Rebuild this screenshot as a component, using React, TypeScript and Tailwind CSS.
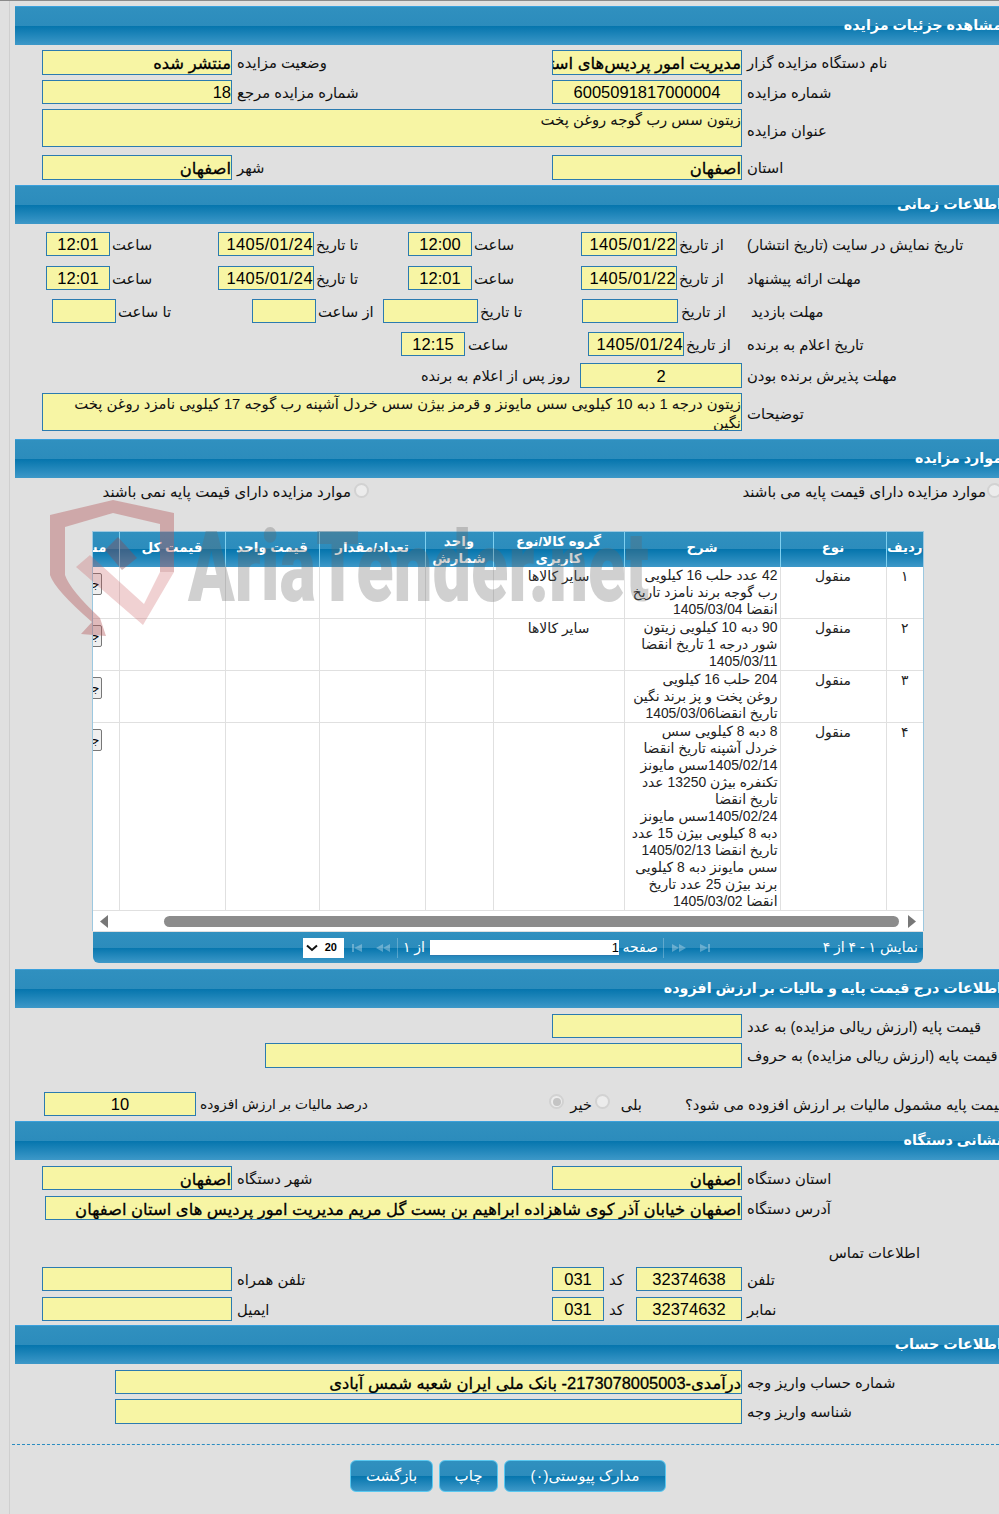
import type { ReactNode } from 'react';

const barGradient =
  'bg-[linear-gradient(to_bottom,#3090bf_0%,#2c8cbc_50%,#0575ad_50%,#3d98c8_100%)]';

function SectionHeader({ title, className = '' }: { title: string; className?: string }) {
  return (
    <div
      className={`h-[39px] ml-[5px] flex items-center overflow-hidden border-t border-[#3aa0dc] ${barGradient} ${className}`}
    >
      <span className="-mr-[3px] shrink-0 text-[14.3px] font-bold text-white whitespace-nowrap">{title}</span>
    </div>
  );
}

function Row({ className = '', children }: { className?: string; children: ReactNode }) {
  return <div className={`flex shrink-0 ${className}`}>{children}</div>;
}

// label cell: text sits at the left edge of the cell, the way the old form tables do
function Label({ className = '', children }: { className?: string; children: ReactNode }) {
  return (
    <div className={`flex items-center justify-end shrink-0 overflow-hidden pl-[5px] pt-[2px] text-[14.8px] text-[#111] whitespace-nowrap ${className}`}>
      <span className="shrink-0">{children}</span>
    </div>
  );
}

function Field({
  className = '',
  value = '',
  center = false,
  bold = false,
}: {
  className?: string;
  value?: string;
  center?: boolean;
  bold?: boolean;
}) {
  return (
    <div
      className={`flex items-center shrink-0 overflow-hidden border border-[#2b7bb0] bg-[#f7f5a4] text-black whitespace-nowrap ${
        center ? 'justify-center' : 'justify-start'
      } ${bold ? 'pt-[2px] text-[16.4px] [-webkit-text-stroke:0.3px_black]' : 'pt-[1px] text-[16.5px]'} ${className}`}
    >
      {value}
    </div>
  );
}

function Area({ className = '', value }: { className?: string; value: string }) {
  return (
    <div className={`shrink-0 overflow-hidden border border-[#2b7bb0] bg-[#f7f5a4] pt-[1px] pl-[10px] text-[14.8px] leading-[19px] text-[#111] ${className}`}>
      {value}
    </div>
  );
}

function Radio({ className = '', checked = false }: { className?: string; checked?: boolean }) {
  return (
    <span className={`flex items-center justify-center shrink-0 w-[15px] h-[15px] rounded-full border-2 border-[#d2d2d2] bg-[#ececec] ${className}`}>
      {checked && <span className="w-[8px] h-[8px] rounded-full bg-[#c4c4c4]" />}
    </span>
  );
}

const items = [
  {
    no: '۱',
    group: 'سایر کالاها',
    lines: ['42 عدد حلب 16 کیلویی', 'رب گوجه برند نامزد تاریخ', 'انقضا 1405/03/04'],
  },
  {
    no: '۲',
    group: 'سایر کالاها',
    lines: ['90 دبه 10 کیلویی زیتون', 'شور درجه 1 تاریخ انقضا', '1405/03/11'],
  },
  {
    no: '۳',
    group: '',
    lines: ['204 حلب 16 کیلویی', 'روغن پخت و پز برند نگین', 'تاریخ انقضا1405/03/06'],
  },
  {
    no: '۴',
    group: '',
    lines: [
      '8 دبه 8 کیلویی سس',
      'خردل آشپنه تاریخ انقضا',
      '1405/02/14سس مایونز',
      'تکنفره بیژن 13250 عدد',
      'تاریخ انقضا',
      '1405/02/24سس مایونز',
      'دبه 8 کیلویی بیژن 15 عدد',
      'تاریخ انقضا 1405/02/13',
      'سس مایونز دبه 8 کیلویی',
      'برند بیژن 25 عدد تاریخ',
      'انقضا 1405/03/02',
    ],
  },
];

const headers = [
  { text: 'ردیف', cls: 'pb-[5px]' },
  { text: 'نوع', cls: 'pb-[5px]' },
  { text: 'شرح', cls: 'pb-[5px]' },
  { text: 'گروه کالا/نوع کاربری', cls: '' },
  { text: 'واحد شمارش', cls: '' },
  { text: 'تعداد/مقدار', cls: 'pb-[5px]' },
  { text: 'قیمت واحد', cls: 'pb-[5px]' },
  { text: 'قیمت کل', cls: 'pb-[5px]' },
  { text: 'مشاهده', cls: 'pb-[5px] pr-[12px] whitespace-nowrap' },
];

function ItemsTable() {
  return (
    <table className="w-[831px] table-fixed border-collapse text-[13.9px] leading-[17px] text-[#222]">
      <colgroup>
        <col className="w-[37px]" />
        <col className="w-[106px]" />
        <col className="w-[156px]" />
        <col className="w-[131px]" />
        <col className="w-[68px]" />
        <col className="w-[106px]" />
        <col className="w-[94px]" />
        <col className="w-[106px]" />
        <col className="w-[27px]" />
      </colgroup>
      <thead>
        <tr className={`h-[35px] ${barGradient}`}>
          {headers.map((h) => (
            <th
              key={h.text}
              className={`p-0 text-center text-[13.4px] leading-[17px] font-bold text-white overflow-hidden border-l border-[#7fd0f0] ${h.cls}`}
            >
              {h.text}
            </th>
          ))}
        </tr>
      </thead>
      <tbody className="bg-white">
        {items.map((item) => (
          <tr key={item.no} className="border-b border-[#e0e0e0]">
            <td className="p-0 pt-[1px] align-top text-center border-l border-[#e0e0e0]">{item.no}</td>
            <td className="p-0 pt-[1px] align-top text-center border-l border-[#e0e0e0]">منقول</td>
            <td className="p-0 pr-[2px] align-top text-right whitespace-nowrap overflow-hidden border-l border-[#e0e0e0]">
              {item.lines.map((l) => (
                <div key={l}>{l}</div>
              ))}
            </td>
            <td className="p-0 pt-[1px] align-top text-center border-l border-[#e0e0e0]">{item.group}</td>
            <td className="p-0 border-l border-[#e0e0e0]" />
            <td className="p-0 border-l border-[#e0e0e0]" />
            <td className="p-0 border-l border-[#e0e0e0]" />
            <td className="p-0 border-l border-[#e0e0e0]" />
            <td className="p-0 align-top overflow-hidden">
              <div className="flex justify-start pr-[17px] pt-[6px]">
                <button className="shrink-0 w-[40px] h-[22px] rounded-[2px] border border-[#777] bg-[#efefef] text-[12px] text-black text-right pr-[1px]">
                  جزئیات
                </button>
              </div>
            </td>
          </tr>
        ))}
      </tbody>
    </table>
  );
}

function Triangle({ left = false }: { left?: boolean }) {
  return (
    <svg width="8" height="13" viewBox="0 0 8 13" className="shrink-0">
      <path d={left ? 'M8 0V13L0 6.5Z' : 'M0 0V13L8 6.5Z'} fill="#777" />
    </svg>
  );
}

function PagerIcon({ d, className = '' }: { d: string; className?: string }) {
  return (
    <svg width="14" height="8" viewBox="0 0 14 8" className={`shrink-0 opacity-30 ${className}`}>
      <path d={d} fill="#fff" />
    </svg>
  );
}

function Watermark() {
  return (
    <div className="absolute left-[50px] top-[498px] w-[620px] h-[145px] pointer-events-none">
      <svg width="130" height="140" viewBox="50 498 130 140" className="absolute left-0 top-0">
        <path
          d="M50 515 L113 500 L174 513 L174 572 L160 572 L160 524 L113 513 L65 527 L65 575 Q70 590 100 618 L106 636 L81 634 L92 622 Q55 590 50 575 Z"
          fill="#b45a5c"
          fillOpacity="0.42"
        />
        <path d="M76 567 L90 555 L144 604 L160 572 L174 572 L143 625 Z" fill="#c8585c" fillOpacity="0.28" />
        <path d="M105 550 L118 537 L137 558 L122 570 Z" fill="#8a4a55" fillOpacity="0.4" />
      </svg>
      <span className="absolute left-[138px] top-[20px] origin-left scale-x-[0.7] font-['Roboto',sans-serif] text-[98px] leading-[100px] font-black text-[#666] opacity-[0.3] whitespace-nowrap">
        AriaTender.net
      </span>
    </div>
  );
}

export default function App() {
  return (
    <div
      dir="rtl"
      className="relative w-[999px] h-[1514px] overflow-hidden bg-[#e0e0e0] font-['Liberation_Sans','DejaVu_Sans',sans-serif]"
    >
      <div className="h-px bg-[#8a8a8a]" />
      <div className="ml-[9px] h-[1513px] pt-[5px] border-l border-[#cfcfcf] flex flex-col">
        <SectionHeader title="مشاهده جزئیات مزایده" />
        <Row className="mt-[5px] h-[25px]">
          <Label className="w-[257px]">نام دستگاه مزایده گزار</Label>
          <Field className="w-[190px]" bold value="مدیریت امور پردیس‌های استان اصفهان" />
          <Label className="w-[320px]">وضعیت مزایده</Label>
          <Field className="w-[190px]" bold value="منتشر شده" />
        </Row>
        <Row className="mt-[5px] h-[24px]">
          <Label className="w-[257px]">شماره مزایده</Label>
          <Field className="w-[190px]" center value="6005091817000004" />
          <Label className="w-[320px]">شماره مزایده مرجع</Label>
          <Field className="w-[190px]" value="18" />
        </Row>
        <Row className="mt-[5px] h-[38px]">
          <Label className="w-[257px] !pt-[6px]">عنوان مزایده</Label>
          <Area className="w-[700px]" value="زیتون سس رب گوجه روغن پخت" />
        </Row>
        <Row className="mt-[8px] h-[25px]">
          <Label className="w-[257px]">استان</Label>
          <Field className="w-[190px]" bold value="اصفهان" />
          <Label className="w-[320px]">شهر</Label>
          <Field className="w-[190px]" bold value="اصفهان" />
        </Row>

        <SectionHeader title="اطلاعات زمانی" className="mt-[5px]" />
        <Row className="mt-[8px] h-[24px]">
          <Label className="w-[257px]">تاریخ نمایش در سایت (تاریخ انتشار)</Label>
          <Label className="w-[65px] !pl-[2px]">از تاریخ</Label>
          <Field className="w-[96px] tracking-[0.4px]" value="1405/01/22" />
          <Label className="w-[109px] !pl-[2px]">ساعت</Label>
          <Field className="w-[64px]" center value="12:00" />
          <Label className="w-[94px] !pl-[2px]">تا تاریخ</Label>
          <Field className="w-[96px] tracking-[0.4px]" value="1405/01/24" />
          <Label className="w-[108px] !pl-[2px]">ساعت</Label>
          <Field className="w-[64px]" center value="12:01" />
        </Row>
        <Row className="mt-[10px] h-[24px]">
          <Label className="w-[257px]">مهلت ارائه پیشنهاد</Label>
          <Label className="w-[65px] !pl-[2px]">از تاریخ</Label>
          <Field className="w-[96px] tracking-[0.4px]" value="1405/01/22" />
          <Label className="w-[109px] !pl-[2px]">ساعت</Label>
          <Field className="w-[64px]" center value="12:01" />
          <Label className="w-[94px] !pl-[2px]">تا تاریخ</Label>
          <Field className="w-[96px] tracking-[0.4px]" value="1405/01/24" />
          <Label className="w-[108px] !pl-[2px]">ساعت</Label>
          <Field className="w-[64px]" center value="12:01" />
        </Row>
        <Row className="mt-[9px] h-[24px]">
          <Label className="w-[257px] !pl-[9px]">مهلت بازدید</Label>
          <Label className="w-[64px] !pl-[3px]">از تاریخ</Label>
          <Field className="w-[96px]" />
          <Label className="w-[104px] !pl-[2px]">تا تاریخ</Label>
          <Field className="w-[95px]" />
          <Label className="w-[67px] !pl-[2px]">از ساعت</Label>
          <Field className="w-[64px]" />
          <Label className="w-[136px] !pl-[2px]">تا ساعت</Label>
          <Field className="w-[64px]" />
        </Row>
        <Row className="mt-[9px] h-[24px]">
          <Label className="w-[257px]">تاریخ اعلام به برنده</Label>
          <Label className="w-[58px] !pl-[2px]">از تاریخ</Label>
          <Field className="w-[96px] tracking-[0.4px]" value="1405/01/24" />
          <Label className="w-[123px] !pl-[3px]">ساعت</Label>
          <Field className="w-[64px]" center value="12:15" />
        </Row>
        <Row className="mt-[7px] h-[25px]">
          <Label className="w-[257px]">مهلت پذیرش برنده بودن</Label>
          <Field className="w-[162px]" center value="2" />
          <div className="flex items-center mr-[10px] pt-[2px] text-[14.6px] text-[#111]">روز پس از اعلام به برنده</div>
        </Row>
        <Row className="mt-[5px] h-[38px]">
          <Label className="w-[257px] !pt-[4px]">توضیحات</Label>
          <Area
            className="w-[700px]"
            value="زیتون درجه 1 دبه 10 کیلویی سس مایونز و قرمز بیژن سس خردل آشپنه رب گوجه 17 کیلویی نامزد روغن پخت نگین"
          />
        </Row>

        <SectionHeader title="موارد مزایده" className="mt-[8px]" />
        <Row className="mt-[6px] h-[16px] items-center text-[15px] text-[#111]">
          <Radio className="-mr-[3px] -mt-[4px]" />
          <span className="mr-[1px] w-[260px] whitespace-nowrap">موارد مزایده دارای قیمت پایه می باشند</span>
          <Radio className="mr-[357px] -mt-[4px]" />
          <span className="mr-[3px] whitespace-nowrap">موارد مزایده دارای قیمت پایه نمی باشند</span>
        </Row>

        <div className="mt-[31px] mr-[75px] w-[832px] shrink-0 border border-[#9cc8e0] border-b-0 overflow-hidden">
          <ItemsTable />
          <div className="flex items-center h-[20px] bg-white px-[7px]">
            <Triangle />
            <div className="flex-1 mx-[9px] h-[11px] rounded-full bg-[#8c8c8c] ml-[56px]" />
            <Triangle left />
          </div>
        </div>
        <div className={`mt-[1px] mr-[76px] w-[830px] h-[31px] shrink-0 rounded-b-[6px] flex items-center text-[14px] text-white whitespace-nowrap ${barGradient}`}>
          <span className="w-[213px] pr-[5px]">نمایش ۱ - ۴ از ۴</span>
          <PagerIcon d="M0 0V8H2V0ZM2 4L10 0V8Z" className="rotate-180" />
          <PagerIcon d="M0 4L7 0V8ZM7 4L14 0V8Z" className="mr-[10px] rotate-180" />
          <span className="mr-[8px] w-px h-[20px] bg-white/25" />
          <span className="w-[44px] pr-[5px]">صفحه</span>
          <span className="w-[189px] h-[16px] bg-white border-b border-[#2b7bb0] text-[13px] leading-[16px] text-black">1</span>
          <span className="w-[32px] pr-[5px]">از ۱</span>
          <span className="w-px h-[20px] bg-white/25" />
          <PagerIcon d="M0 4L7 0V8ZM7 4L14 0V8Z" className="mr-[7px]" />
          <PagerIcon d="M0 0V8H2V0ZM2 4L10 0V8Z" className="mr-[10px]" />
          <span className="mr-[8px] w-[41px] h-[20px] bg-white flex items-center justify-between pr-[7px] pl-[3px] text-[11px] font-bold text-black">
            <span>20</span>
            <svg width="12" height="8" viewBox="0 0 12 8" className="shrink-0">
              <path d="M1 1.5L6 6L11 1.5" fill="none" stroke="#111" strokeWidth="2" />
            </svg>
          </span>
        </div>

        <SectionHeader title="اطلاعات درج قیمت پایه و مالیات بر ارزش افزوده" className="mt-[6px]" />
        <Row className="mt-[6px] h-[24px]">
          <Label className="w-[257px]">قیمت پایه (ارزش ریالی مزایده) به عدد</Label>
          <Field className="w-[190px]" />
        </Row>
        <Row className="mt-[5px] h-[25px]">
          <Label className="w-[257px]">قیمت پایه (ارزش ریالی مزایده) به حروف</Label>
          <Field className="w-[477px]" />
        </Row>
        <Row className="mt-[24px] h-[24px] items-center text-[14.8px] text-[#111]">
          <Label className="w-[319px]">قیمت پایه مشمول مالیات بر ارزش افزوده می شود؟</Label>
          <span className="mr-[38px] w-[32px] pt-[2px]">بلی</span>
          <Radio className="-mt-[5px]" />
          <span className="w-[31px] pr-[3px] pt-[2px]">خیر</span>
          <Radio className="-mt-[5px]" checked />
          <Label className="w-[353px] !pl-[4px] !text-[13.8px]">درصد مالیات بر ارزش افزوده</Label>
          <Field className="w-[152px] h-[24px]" center value="10" />
        </Row>

        <SectionHeader title="نشانی دستگاه" className="mt-[5px]" />
        <Row className="mt-[6px] h-[24px]">
          <Label className="w-[257px]">استان دستگاه</Label>
          <Field className="w-[190px]" bold value="اصفهان" />
          <Label className="w-[320px]">شهر دستگاه</Label>
          <Field className="w-[190px]" bold value="اصفهان" />
        </Row>
        <Row className="mt-[6px] h-[24px]">
          <Label className="w-[257px]">آدرس دستگاه</Label>
          <Field
            className="w-[697px]"
            bold
            value="اصفهان خیابان آذر کوی شاهزاده ابراهیم بن بست گل مریم مدیریت امور پردیس های استان اصفهان"
          />
        </Row>
        <Row className="mt-[22px] h-[20px]">
          <Label className="mr-[79px] !pl-0">اطلاعات تماس</Label>
        </Row>
        <Row className="mt-[5px] h-[24px]">
          <Label className="w-[257px]">تلفن</Label>
          <Field className="w-[106px]" center value="32374638" />
          <Label className="w-[32px]">کد</Label>
          <Field className="w-[52px]" center value="031" />
          <Label className="w-[320px]">تلفن همراه</Label>
          <Field className="w-[190px]" />
        </Row>
        <Row className="mt-[6px] h-[24px]">
          <Label className="w-[257px]">نمابر</Label>
          <Field className="w-[106px]" center value="32374632" />
          <Label className="w-[32px]">کد</Label>
          <Field className="w-[52px]" center value="031" />
          <Label className="w-[320px]">ایمیل</Label>
          <Field className="w-[190px]" />
        </Row>

        <SectionHeader title="اطلاعات حساب" className="mt-[4px]" />
        <Row className="mt-[6px] h-[24px]">
          <Label className="w-[257px]">شماره حساب واریز وجه</Label>
          <Field className="w-[627px]" bold value="درآمدی-2173078005003- بانک ملی ایران شعبه شمس آبادی" />
        </Row>
        <Row className="mt-[5px] h-[25px]">
          <Label className="w-[257px]">شناسه واریز وجه</Label>
          <Field className="w-[627px]" />
        </Row>

        <div className="mt-[20px] ml-[2px] border-t border-dashed border-[#2b8cc0]" />
        <div className="mt-[15px] mr-[333px] flex gap-[6px] text-[15px] text-white">
          <button className={`w-[162px] h-[32px] pt-[1px] rounded-[6px] border border-[#5ac8f0] ${barGradient}`}>مدارک پیوستی(۰)</button>
          <button className={`w-[59px] h-[32px] pt-[1px] rounded-[6px] border border-[#5ac8f0] ${barGradient}`}>چاپ</button>
          <button className={`w-[83px] h-[32px] pt-[1px] rounded-[6px] border border-[#5ac8f0] ${barGradient}`}>بازگشت</button>
        </div>
      </div>
      <Watermark />
    </div>
  );
}
